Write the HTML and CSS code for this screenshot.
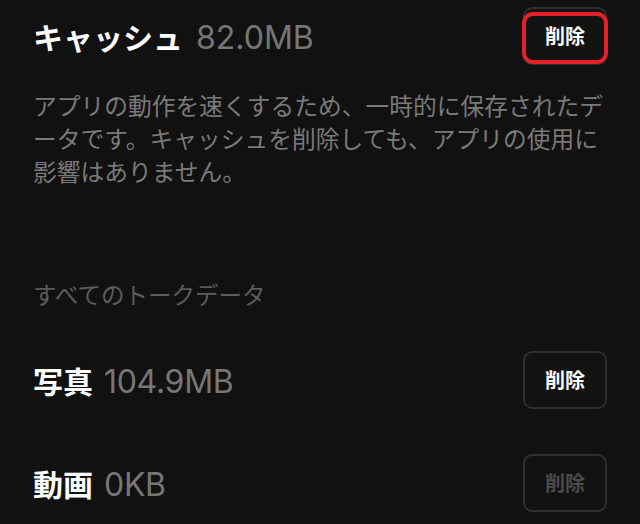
FILE: index.html
```html
<!DOCTYPE html>
<html lang="ja">
<head>
<meta charset="utf-8">
<link rel="stylesheet" href="styles.css">
</head>
<body>
<div class="page">
  <div class="row row-first">
    <div class="label"><span class="name">キャッシュ</span><span class="size">82.0MB</span></div>
    <div class="btn-wrap">
      <button class="btn">削除</button>
      <div class="annot"></div>
    </div>
  </div>
  <p class="desc">アプリの動作を速くするため、一時的に保存されたデ<br>ータです。キャッシュを削除しても、アプリの使用に<br>影響はありません。</p>
  <div class="section">すべてのトークデータ</div>
  <div class="row row-photo">
    <div class="label"><span class="name">写真</span><span class="size">104.9MB</span></div>
    <div class="btn-wrap"><button class="btn">削除</button></div>
  </div>
  <div class="row row-video">
    <div class="label"><span class="name">動画</span><span class="size">0KB</span></div>
    <div class="btn-wrap"><button class="btn disabled">削除</button></div>
  </div>
</div>
</body>
</html>
```
FILE: styles.css
```css
html, body {
  margin: 0;
  padding: 0;
  background: #111111;
}
body {
  font-family: "Noto Sans CJK JP", sans-serif;
  color: #ffffff;
  width: 640px;
  height: 524px;
  overflow: hidden;
}
.page {
  padding: 7px 33px 0 33px;
}
.row {
  display: flex;
  align-items: center;
  justify-content: space-between;
  height: 58px;
}
.row-photo { margin-top: 40px; }
.row-video { margin-top: 45px; }
.label {
  display: flex;
  align-items: baseline;
  margin-top: 1px;
}
.name {
  font-family: "Noto Sans CJK JP", sans-serif;
  font-weight: 700;
  font-size: 30px;
  line-height: 40px;
  color: #ffffff;
}
.size {
  font-family: Inter, "Liberation Sans", sans-serif;
  font-weight: 400;
  font-size: 32px;
  line-height: 40px;
  color: #767676;
  margin-left: 13px;
}
.row-photo .size, .row-video .size {
  margin-left: 11px;
  letter-spacing: -0.3px;
}
.btn-wrap {
  position: relative;
  width: 84px;
  height: 58px;
}
.btn {
  box-sizing: border-box;
  width: 84px;
  height: 58px;
  background: #121212;
  border: 2px solid #2e2e2e;
  border-radius: 9px;
  color: #ffffff;
  font-family: "Noto Sans CJK JP", sans-serif;
  font-weight: 700;
  font-size: 20px;
  line-height: 24px;
  padding: 0;
}
.btn.disabled {
  color: #4b4b4b;
}
.annot {
  position: absolute;
  left: -1px;
  top: 5px;
  width: 86px;
  height: 52px;
  box-sizing: border-box;
  border: 4px solid #e3202a;
  border-radius: 11px;
}
.desc {
  margin: 23px 0 0 0;
  font-size: 23.75px;
  line-height: 33px;
  color: #7a7a7a;
  white-space: nowrap;
}
.section {
  margin-top: 91px;
  font-size: 23.5px;
  line-height: 33px;
  color: #5c5c5c;
}
```
